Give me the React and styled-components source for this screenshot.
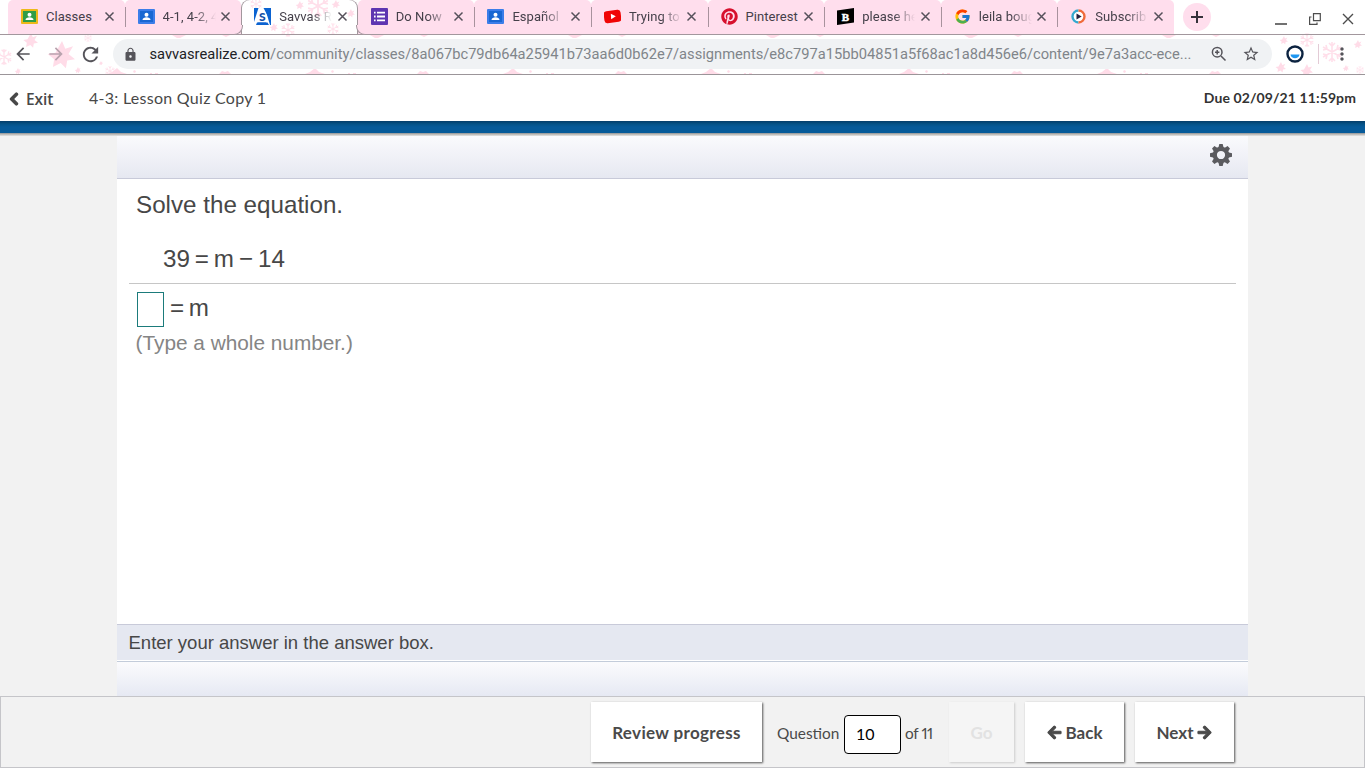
import React from "react";
import styled, { createGlobalStyle, css } from "styled-components";
import { FaArrowLeft, FaArrowRight, FaChevronLeft, FaPinterest } from "react-icons/fa";
import { MdArrowBack, MdArrowForward, MdRefresh, MdLock, MdStarBorder, MdMoreVert } from "react-icons/md";
import { FcGoogle } from "react-icons/fc";

const GlobalStyle = createGlobalStyle`
  * {
    box-sizing: border-box;
  }
  body {
    margin: 0;
    background: #f2f2f2;
    overflow: hidden;
  }
`;

const Page = styled.div`
  width: 100%;
  height: 768px;
  display: flex;
  flex-direction: column;
`;

const Browser = styled.div`
  position: relative;
  z-index: 0;
  height: 75px;
  flex: none;
  background: #fff;
  border-bottom: 1px solid #9b9599;
  font-family: Roboto, sans-serif;
`;

const Pattern = styled.svg`
  position: absolute;
  top: 0;
  left: 0;
  z-index: -1;
`;

const TabStrip = styled.div`
  display: flex;
  height: 35px;
  padding-left: 8px;
  box-shadow: inset 0 -1px #a2979d;
`;

const Tab = styled.div`
  position: relative;
  display: flex;
  align-items: center;
  width: 116.6px;
  height: 34px;
  padding: 0 0 1px 13px;
  background: #ffdeed;
  border-radius: 5px 5px 0 0;

  ${(props) =>
    props.$divider &&
    css`
      &::after {
        content: "";
        position: absolute;
        right: -1px;
        top: 7px;
        z-index: 1;
        width: 1px;
        height: 20px;
        background: #a8929d;
      }
    `}

  ${(props) =>
    props.$active &&
    css`
      height: 35px;
      padding-bottom: 2px;
      background: none;
      border-radius: 8px 8px 0 0;
      box-shadow: inset 1px 0 #a2979d, inset -1px 0 #a2979d;
      &::before,
      &::after {
        content: "";
        position: absolute;
        bottom: 0;
        width: 9px;
        height: 9px;
        background: #ffdeed;
        border-bottom: 1px solid #a2979d;
      }
      &::before {
        left: -8px;
        border-right: 1px solid #a2979d;
        border-bottom-right-radius: 9px;
      }
      &::after {
        right: -8px;
        z-index: 1;
        border-left: 1px solid #a2979d;
        border-bottom-left-radius: 9px;
      }
    `}

  > svg {
    flex: none;
  }
`;

const TabTitle = styled.span`
  width: 53px;
  margin-left: 8px;
  white-space: nowrap;
  font-size: 13px;
  line-height: 18px;
  letter-spacing: 0.05px;
  color: #45404a;
  mask-image: ${(props) => (props.$fade ? "linear-gradient(90deg, #000 60%, transparent 100%)" : "none")};
`;

const CloseIcon = styled.svg`
  margin-left: 4.5px;
`;

const NewTab = styled.div`
  display: flex;
  align-items: center;
  justify-content: center;
  width: 28px;
  height: 28px;
  margin: 3px 0 0 9px;
  border-radius: 50%;
  background: #ffdeed;
`;

const WindowButtons = styled.div`
  display: flex;
  align-items: center;
  gap: 21.5px;
  margin-left: auto;
  padding: 2px 11px 0 0;
`;

const Toolbar = styled.div`
  display: flex;
  align-items: center;
  height: 38px;
  color: #55545a;
`;

const NavIcons = styled.div`
  display: flex;
  align-items: center;
  gap: 13px;
  width: 113px;
  flex: none;
  padding-left: 13px;
`;

const AddressBar = styled.div`
  display: flex;
  align-items: center;
  width: 1159px;
  height: 30px;
  padding: 0 12px 0 10px;
  border-radius: 15px;
  background: #f0f2f4;

  > svg {
    flex: none;
  }
`;

const Url = styled.div`
  flex: 1;
  margin-left: 11.5px;
  white-space: nowrap;
  font-size: 14.68px;
  color: #80858a;
  b {
    font-weight: 400;
    color: #202124;
  }
`;

const AddressIcons = styled.div`
  display: flex;
  align-items: center;
  gap: 15px;
`;

const ToolbarEnd = styled.div`
  display: flex;
  align-items: center;
  margin-left: 14px;
`;

const Divider = styled.div`
  width: 1px;
  height: 20px;
  margin: 0 13px 0 14px;
  background: #e3cbd6;
`;

const Header = styled.header`
  display: flex;
  align-items: center;
  height: 46px;
  flex: none;
  padding: 0 9px 0 7px;
  background: #fff;
  font-family: Lato, sans-serif;
  color: #484848;
`;

const Exit = styled.div`
  display: flex;
  align-items: center;
  gap: 5px;
  width: 82px;
  padding-top: 2px;
  font: 600 15.5px "Open Sans", sans-serif;
  letter-spacing: -0.1px;

  svg {
    stroke: currentColor;
    stroke-width: 50;
    overflow: visible;
  }
`;

const LessonTitle = styled.div`
  padding-bottom: 2px;
  font-size: 16px;
  letter-spacing: 0.27px;
`;

const Due = styled.div`
  margin-left: auto;
  padding-bottom: 2px;
  font-size: 14px;
  font-weight: 700;
  letter-spacing: 0.1px;
  color: #333;
`;

const BlueBar = styled.div`
  height: 15px;
  flex: none;
  background: linear-gradient(#043d69 0, #045287 3px, #065a99 6px, #065a99 12px, #8b9096 12px, #b5b2ae 13px, #e4e4e4 15px);
`;

const Player = styled.main`
  display: flex;
  flex-direction: column;
  width: 1131px;
  height: 560px;
  flex: none;
  margin-left: 117px;
  background: #fff;
  font-family: "Liberation Sans", Arial, sans-serif;
  color: #474747;
`;

const PlayerTop = styled.div`
  display: flex;
  justify-content: flex-end;
  height: 43px;
  padding: 7px 15px 0 0;
  background: linear-gradient(#fafafd, #e6e8f1);
  border-bottom: 1px solid #c8cad9;
`;

const Question = styled.div`
  height: 105px;
  margin: 0 12px;
  padding: 10px 0 0 7px;
  border-bottom: 1px solid #c6c6c6;
  font-size: 24.2px;
  line-height: 32px;
`;

const Equation = styled.div`
  margin: 22px 0 0 27px;
  word-spacing: -1.8px;
`;

const Answer = styled.div`
  flex: 1;
  padding: 8px 0 0 18.5px;
`;

const AnswerLine = styled.div`
  display: flex;
  gap: 6.5px;
  height: 35px;
  padding-left: 1px;
  font-size: 24.2px;
  line-height: 32px;
  word-spacing: -2px;
`;

const AnswerBox = styled.div`
  width: 27px;
  height: 35px;
  border: 1px solid #1b7b7b;
`;

const Hint = styled.div`
  margin-top: 4px;
  font-size: 20.8px;
  line-height: 24px;
  color: #858585;
`;

const Instruction = styled.div`
  height: 37px;
  padding-left: 11.5px;
  background: #e5e8f1;
  border-top: 1px solid #c8cad9;
  border-bottom: 1px solid #fff;
  font-size: 18.5px;
  line-height: 36px;
`;

const PlayerBottom = styled.div`
  height: 35px;
  border-top: 1px solid #c3ccda;
  background: linear-gradient(#fbfbfd, #e6e9f3);
`;

const Footer = styled.footer`
  display: flex;
  flex: 1;
  padding: 5px 130px 0 0;
  justify-content: flex-end;
  border: 1px solid #c5c5c9;
  background: #f2f2f2;
  font-family: Lato, sans-serif;
  color: #4a4a4a;
`;

const Button = styled.button`
  display: flex;
  align-items: center;
  justify-content: center;
  gap: 4px;
  width: ${(props) => props.$width}px;
  height: 60px;
  margin-left: 11px;
  padding: 1px 0 0;
  border: 0;
  background: #fff;
  box-shadow: 1px 1px 2px #555;
  font: 700 17px Lato, sans-serif;
  letter-spacing: ${(props) => props.$spacing || "0"};
  color: #4a4a4a;

  svg {
    stroke: currentColor;
    stroke-width: 36;
    overflow: visible;
  }

  &:disabled {
    margin-left: 14px;
    background: #f5f5f5;
    box-shadow: 1px 1px 2px #ccc;
    color: #e2e2e2;
  }
`;

const Pager = styled.div`
  display: flex;
  align-items: center;
  height: 60px;
  margin-left: 15px;
  padding-top: 4px;
  font-size: 15.4px;
`;

const PagerLabel = styled.span`
  width: ${(props) => props.$width}px;
  padding-bottom: 2px;
  white-space: nowrap;
  letter-spacing: ${(props) => props.$spacing || "0"};
  font-variant-numeric: proportional-nums;
`;

const PageInput = styled.div`
  width: 57px;
  height: 39px;
  margin: 0 4px 0 5px;
  padding-left: 11px;
  border: 1px solid #000;
  border-radius: 4px;
  background: #fff;
  color: #000;
  font-size: 16px;
  line-height: 36px;
`;

const ClassroomIcon = ({ board, frame }) => (
  <svg width="17" height="17" viewBox="0 0 17 17">
    <rect y="1" width="17" height="15" rx="1" fill={frame} />
    <rect x="2" y="3" width="13" height="11" fill={board} />
    <circle cx="8.5" cy="6.8" r="2" fill="#fff" />
    <path d="M4.5 12c0-2 2-2.8 4-2.8s4 .8 4 2.8z" fill="#fff" />
  </svg>
);

const SavvasIcon = () => (
  <svg width="17" height="17" viewBox="0 0 17 17">
    <path d="M0 0h17v17H0z" fill="#0b63d1" />
    <path d="M4.5 0h5L17 14v3h-2l-1.500-2.500H3L2 17H0v-3z" fill="#fff" />
    <path d="M11 0h6v17h-1z" fill="#0b63d1" />
    <path d="M3.5 14.5H12l1 2.500H8z" fill="#0b63d1" />
    <text x="8.3" y="12.5" fill="#124fa6" fontFamily="Lato" fontWeight="900" fontSize="12" textAnchor="middle">S</text>
  </svg>
);

const FormsIcon = () => (
  <svg width="17" height="17" viewBox="0 0 17 17">
    <rect width="17" height="17" rx="1" fill="#5e35b1" />
    <path d="M3 4.7h1.6M3 8.5h1.6M3 12.3h1.6M6 4.7h8M6 8.5h8M6 12.3h8" stroke="#fff" strokeWidth="1.8" />
  </svg>
);

const YoutubeIcon = () => (
  <svg width="17" height="17" viewBox="0 0 17 17">
    <rect x="0" y="2.5" width="17" height="12" rx="3" fill="#f00505" transform="rotate(-7 8.5 8.5)" />
    <path d="m6.8 5.8 5 2.4-4.6 3z" fill="#fff" />
  </svg>
);

const BrainlyIcon = () => (
  <svg width="17" height="17" viewBox="0 0 17 17">
    <path d="m0 2.5 17-2.5v14.5L0 17z" fill="#000" />
    <text x="8.5" y="12.5" fill="#fff" stroke="#fff" strokeWidth="0.5" fontFamily="Liberation Serif" fontWeight="700" fontSize="11" textAnchor="middle">B</text>
  </svg>
);

const PlayIcon = () => (
  <svg width="17" height="17" viewBox="0 0 17 17">
    <circle cx="8.5" cy="8.5" r="7" fill="#fff" />
    <path d="M8.5 2.5a6 6 0 0 0 0 12" fill="none" stroke="#35a8cf" strokeWidth="2.4" />
    <path d="M8.5 2.5a6 6 0 0 1 0 12" fill="none" stroke="#f06a3b" strokeWidth="2.4" />
    <path d="m6.5 5.5 5.2 3-5.2 3z" fill="#26213f" />
  </svg>
);

const GearIcon = () => (
  <svg width="24" height="24" viewBox="-12 -12 24 24" fill="#5b5b5f">
    {[0, 45, 90, 135].map((angle) => (
      <path key={angle} d="M-1.7-11h3.4l1 4h-5.400zM-1.7 11h3.4l1-4h-5.4z" transform={`rotate(${angle})`} />
    ))}
    <circle r="6.2" fill="none" stroke="#5b5b5f" strokeWidth="4.2" />
  </svg>
);

const tabs = [
  { title: "Classes", icon: <ClassroomIcon board="#2f9d48" frame="#edb91a" /> },
  { title: "4-1, 4-2, 4", icon: <ClassroomIcon board="#1967d2" frame="#3b7de9" />, fade: true },
  { title: "Savvas R", icon: <SavvasIcon />, fade: true, active: true },
  { title: "Do Now", icon: <FormsIcon />, fade: true },
  { title: "Español", icon: <ClassroomIcon board="#1967d2" frame="#3b7de9" />, fade: true },
  { title: "Trying to", icon: <YoutubeIcon />, fade: true },
  { title: "Pinterest", icon: <FaPinterest size={17} color="#d7102d" /> },
  { title: "please he", icon: <BrainlyIcon />, fade: true },
  { title: "leila boug", icon: <FcGoogle size={17} />, fade: true },
  { title: "Subscrib", icon: <PlayIcon />, fade: true },
];

// x, y, radius, kind
const flakes = [
  [4, 57, 8, "flake"], [31, 40, 7, "star"], [18, 71, 3, "star"], [62, 54, 13, "star"],
  [88, 38, 4, "flake"], [101, 63, 2, "star"], [110, 71, 5, "flake"], [78, 70, 3, "star"],
  [256, 4, 6, "flake"], [274, 27, 4, "star"], [288, 30, 7, "flake"], [318, 6, 11, "flake"],
  [300, 5, 4, "star"], [336, 4, 4, "star"], [333, 29, 6, "flake"], [351, 13, 4, "star"],
  [1284, 40, 4, "star"], [1307, 40, 7, "flake"], [1332, 52, 10, "flake"], [1281, 67, 5, "star"],
  [1307, 70, 6, "star"], [1358, 44, 4, "star"], [1346, 68, 3, "star"], [1360, 70, 4, "flake"],
];

// the theme image repeats every 198px under the address bar
const repeats = [0, 1, 2, 3, 4, 5].map((n) => n * 198);

const FlakePattern = () => (
  <Pattern width="1365" height="74" fill="#ffdce8" stroke="#ffdfea">
    {flakes.map(([x, y, r, kind]) => (
      <g key={`${x}-${y}`} transform={`translate(${x} ${y}) scale(${r / 10})`}>
        {kind === "star" ? (
          <path d="M0-10 2.5-4 8.5-6 5 0l5 4-6 1-1 6-4-4-6 3 1-6-5-4 6-1z" stroke="none" />
        ) : (
          <path d="M0-10V10M-9-5 9 5M-9 5 9-5M-3-9l3 3 3-3M-3 9l3-3 3 3M-9-2l4-1-1-4M9 2l-4 1 1 4M-9 2l4 1-1 4M9-2l-4-1 1-4" fill="none" strokeWidth="1.6" />
        )}
      </g>
    ))}
    {repeats.map((x) => (
      <g key={x} stroke="none">
        <path d={`M${x + 107} 74l5-2 5-4 4 4 6 2zM${x + 134} 70l2 1-1 2-2-1z`} />
        <path d={`M${x + 219} 74l3-3 3 1 3-1 3 3zM${x + 150} 73h2v1h-2zM${x + 155} 73h3v1h-3z`} />
        <path d={`M${x + 172} 35h14l-6 3h-3zM${x + 222} 35h8l-4 2z`} />
      </g>
    ))}
  </Pattern>
);

export default function App() {
  return (
    <Page>
      <GlobalStyle />
      <Browser>
        <FlakePattern />
        <TabStrip>
          {tabs.map((tab, i) => (
            <Tab key={tab.title} $active={tab.active} $divider={![1, 2, 9].includes(i)}>
              {tab.icon}
              <TabTitle $fade={tab.fade}>{tab.title}</TabTitle>
              <CloseIcon width="11" height="11" viewBox="0 0 11 11">
                <path d="m1.5 1.5 8 8m0-8-8 8" stroke="#55505a" strokeWidth="1.5" />
              </CloseIcon>
            </Tab>
          ))}
          <NewTab>
            <svg width="12" height="12" viewBox="0 0 12 12">
              <path d="M6 0v12M0 6h12" stroke="#35313a" strokeWidth="2" />
            </svg>
          </NewTab>
          <WindowButtons>
            <svg width="12" height="12" viewBox="0 0 12 12">
              <path d="M0 11h12" stroke="#4d4d4d" strokeWidth="1.6" />
            </svg>
            <svg width="12" height="12" viewBox="0 0 12 12" fill="none" stroke="#4d4d4d" strokeWidth="1.2">
              <path d="M4.5.6h6.8v7H4.5zM2.5 4H.6v7.3H8V9.5" />
            </svg>
            <svg width="12" height="12" viewBox="0 0 12 12">
              <path d="m1 1 10 10m0-10L1 11" stroke="#4d4d4d" strokeWidth="1.4" />
            </svg>
          </WindowButtons>
        </TabStrip>
        <Toolbar>
          <NavIcons>
            <MdArrowBack size={20} />
            <MdArrowForward size={20} color="#b9a3ae" />
            <MdRefresh size={23} />
          </NavIcons>
          <AddressBar>
            <MdLock size={15} />
            <Url>
              <b>savvasrealize.com</b>
              /community/classes/8a067bc79db64a25941b73aa6d0b62e7/assignments/e8c797a15bb04851a5f68ac1a8d456e6/content/9e7a3acc-ece...
            </Url>
            <AddressIcons>
              <svg width="16" height="16" viewBox="0 0 16 16" fill="none" stroke="#55545a" strokeWidth="1.5">
                <circle cx="6.2" cy="6.2" r="4.8" />
                <path d="m10 10 4.5 4.5M4 6.2h4.4M6.2 4v4.4" />
              </svg>
              <MdStarBorder size={18} />
            </AddressIcons>
          </AddressBar>
          <ToolbarEnd>
            <svg width="18" height="18" viewBox="0 0 18 18">
              <circle cx="9" cy="9" r="7.5" fill="#fff" stroke="#0c2340" strokeWidth="2.4" />
              <path d="M4.5 9.5h9c-.5 5-8.5 5-9 0z" fill="#1e96f0" />
            </svg>
            <Divider />
            <MdMoreVert size={20} />
          </ToolbarEnd>
        </Toolbar>
      </Browser>
      <Header>
        <Exit>
          <FaChevronLeft size={14} />
          Exit
        </Exit>
        <LessonTitle>4-3: Lesson Quiz Copy 1</LessonTitle>
        <Due>Due 02/09/21 11:59pm</Due>
      </Header>
      <BlueBar />
      <Player>
        <PlayerTop>
          <GearIcon />
        </PlayerTop>
        <Question>
          Solve the equation.
          <Equation>39 = m − 14</Equation>
        </Question>
        <Answer>
          <AnswerLine>
            <AnswerBox />
            <span>= m</span>
          </AnswerLine>
          <Hint>(Type a whole number.)</Hint>
        </Answer>
        <Instruction>Enter your answer in the answer box.</Instruction>
        <PlayerBottom />
      </Player>
      <Footer>
        <Button $width={171} $spacing="0.35px">Review progress</Button>
        <Pager>
          <PagerLabel $width={62}>Question</PagerLabel>
          <PageInput>10</PageInput>
          <PagerLabel $width={30} $spacing="-0.4px">of 11</PagerLabel>
        </Pager>
        <Button $width={65} disabled>
          Go
        </Button>
        <Button $width={99}>
          <FaArrowLeft size={15} />
          Back
        </Button>
        <Button $width={99}>
          Next
          <FaArrowRight size={15} />
        </Button>
      </Footer>
    </Page>
  );
}
